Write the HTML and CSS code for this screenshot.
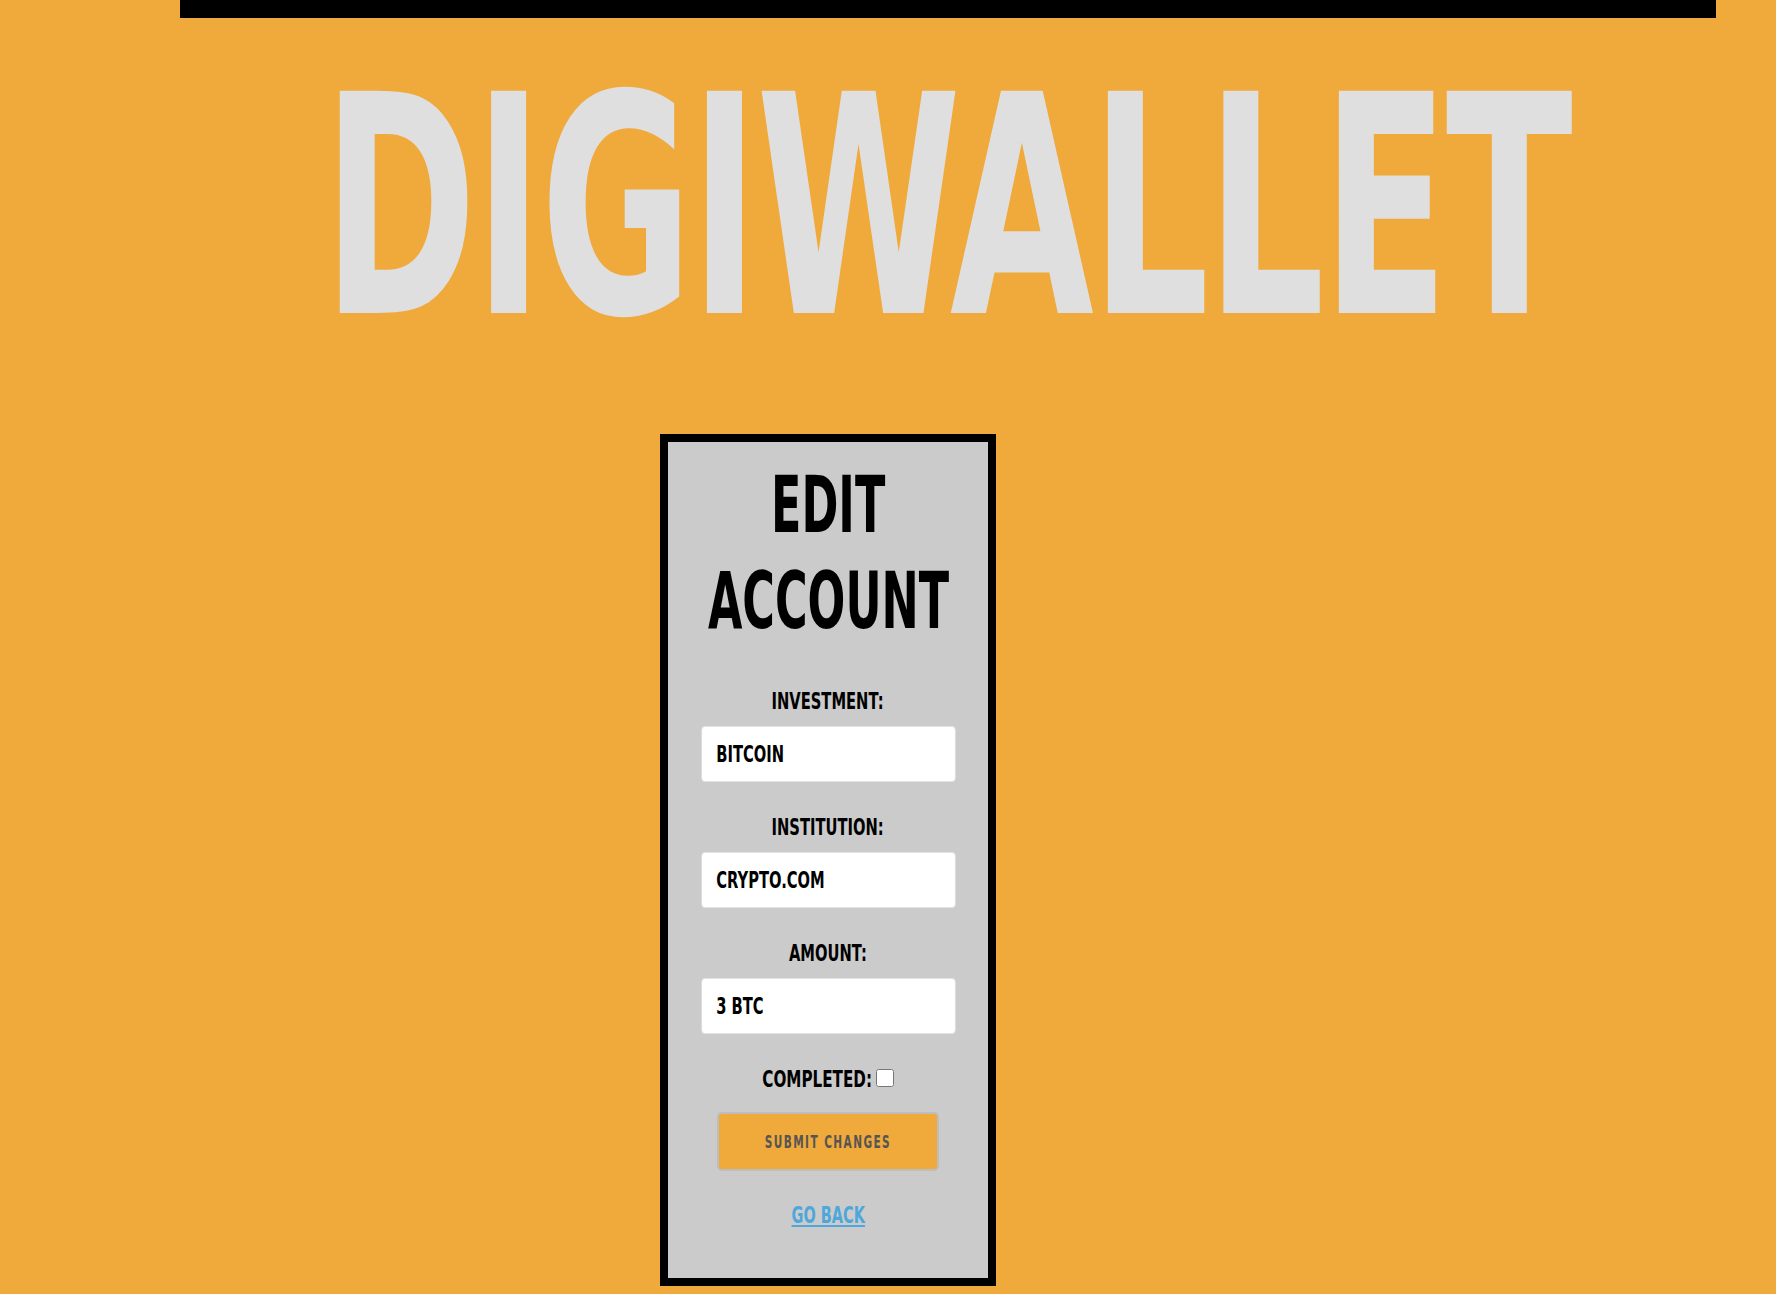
FILE: index.html
```html
<!DOCTYPE html>
<html lang="en">
<head>
<meta charset="utf-8">
<title>DigiWallet - Edit Account</title>
<link rel="stylesheet" href="styles.css">
</head>
<body>
<header class="site-header">
  <div class="topbar"></div>
  <h1 class="brand"><span class="brand-text">DIGIWALLET</span></h1>
</header>
<main>
  <form class="card">
    <h2 class="card-title"><span>EDIT</span><span>ACCOUNT</span></h2>
    <label class="field-label first" for="investment">INVESTMENT:</label>
    <input class="field-input" id="investment" type="text" value="BITCOIN">
    <label class="field-label" for="institution">INSTITUTION:</label>
    <input class="field-input" id="institution" type="text" value="CRYPTO.COM">
    <label class="field-label" for="amount">AMOUNT:</label>
    <input class="field-input" id="amount" type="text" value="3 BTC">
    <div class="check-row">
      <label class="check-label" for="completed">COMPLETED:</label>
      <input class="check-box" id="completed" type="checkbox">
    </div>
    <button class="submit" type="button"><span class="submit-text">SUBMIT CHANGES</span></button>
    <a class="back" href="#">GO BACK</a>
  </form>
</main>
</body>
</html>
```
FILE: styles.css
```css
html, body {
  margin: 0;
  padding: 0;
}

body {
  background: #f0a93b;
  font-family: "DejaVu Sans", sans-serif;
  font-weight: 700;
  color: #000;
}

.topbar {
  width: 1536px;
  height: 18px;
  margin-left: 180px;
  background: #000;
}

.brand {
  margin: 37px 0 0;
  padding-left: 117px;
  display: flex;
  justify-content: center;
  font-size: 305px;
  line-height: 305px;
  font-weight: 700;
  color: #dfdfdf;
}

.brand-text {
  margin: 0 -410px;
  white-space: nowrap;
  letter-spacing: -5px;
  transform: scaleX(0.61);
}

.card {
  box-sizing: border-box;
  width: 336px;
  margin: 74px 0 0 660px;
  border: 8px solid #000;
  background: #cbcbcb;
  display: flex;
  flex-direction: column;
  align-items: center;
  padding: 15px 0 51px;
}

.card-title {
  margin: 0;
  display: flex;
  flex-direction: column;
  align-items: center;
  font-size: 78px;
  line-height: 96px;
  font-weight: 700;
}

.card-title span {
  white-space: nowrap;
  transform: scaleX(0.57);
}

.field-label {
  margin-top: 34px;
  font-size: 23px;
  line-height: 23px;
  white-space: nowrap;
  transform: scaleX(0.64);
}

.field-label.first {
  margin-top: 41px;
}

.field-input {
  box-sizing: border-box;
  margin: 13px 0 0;
  width: 397px;
  height: 56px;
  padding: 0 0 0 22px;
  border: 1px solid #e3e3e3;
  border-radius: 6.25px / 4px;
  background: #fff;
  font: 700 23px "DejaVu Sans", sans-serif;
  color: #000;
  outline: none;
  transform: scaleX(0.64);
}

.check-row {
  margin-top: 34px;
  display: flex;
  align-items: flex-start;
  font-size: 23px;
  line-height: 23px;
}

.check-label {
  margin: 0 -28px;
  white-space: nowrap;
  transform: scaleX(0.66);
}

.check-box {
  width: 18px;
  height: 18px;
  margin: 1px 0 0 3px;
}

.submit {
  box-sizing: border-box;
  margin-top: 21px;
  width: 222px;
  height: 59px;
  padding: 0;
  border: 2px solid #bdbdbd;
  border-radius: 5px;
  background: #f0a93b;
  color: #555;
  font: 700 17px "DejaVu Sans", sans-serif;
  cursor: pointer;
}

.submit-text {
  display: inline-block;
  white-space: nowrap;
  letter-spacing: 2.3px;
  transform: scaleX(0.62);
}

.back {
  margin-top: 33px;
  font-size: 23px;
  line-height: 23px;
  color: #4ea7da;
  text-decoration: underline;
  text-decoration-thickness: 2px;
  text-underline-offset: 2px;
  white-space: nowrap;
  transform: scaleX(0.63);
}
```
